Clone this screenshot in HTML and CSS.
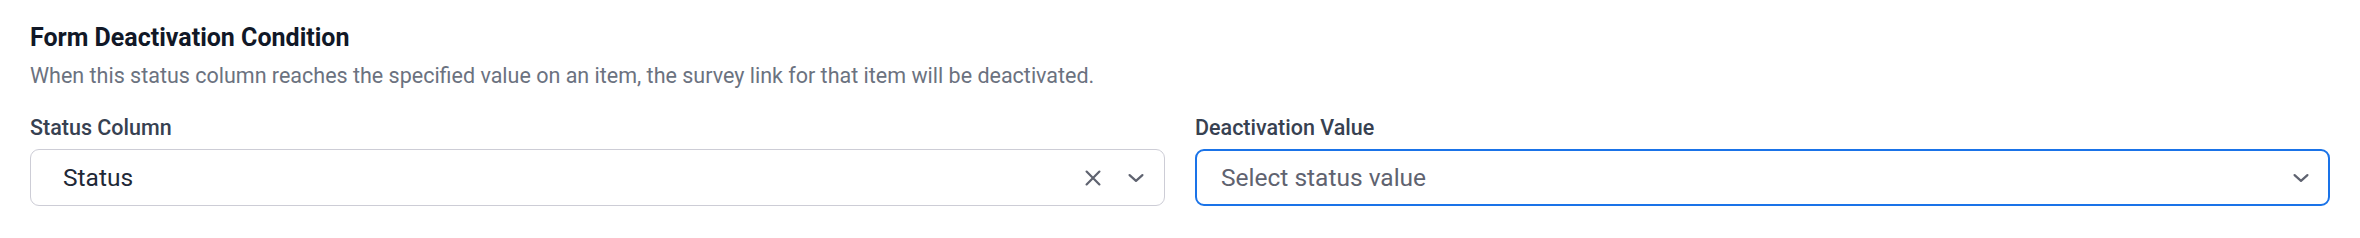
FILE: index.html
```html
<!DOCTYPE html>
<html lang="en">
<head>
    <meta charset="UTF-8">
    <meta name="viewport" content="width=device-width, initial-scale=1.0">
    <title>Form Deactivation Condition</title>
    <link rel="stylesheet" href="styles.css">
</head>
<body>
    <div class="section">
        <h3 class="title">Form Deactivation Condition</h3>
        <p class="hint">When this status column reaches the specified value on an item, the survey link for that item will be deactivated.</p>

        <div class="fields">
            <!-- Columna de estado -->
            <div class="field">
                <label class="label">Status Column</label>
                <div class="select">
                    <span class="value">Status</span>
                    <div class="indicators">
                        <svg class="icon" viewBox="0 0 24 24"><path d="M6.5 6.5l11 11M17.5 6.5l-11 11"/></svg>
                        <svg class="icon" viewBox="0 0 24 24"><path d="M6.5 9.5l5.5 5 5.5-5"/></svg>
                    </div>
                </div>
            </div>

            <!-- Valor de desactivacion (con foco) -->
            <div class="field">
                <label class="label">Deactivation Value</label>
                <div class="select focused">
                    <span class="placeholder">Select status value</span>
                    <div class="indicators">
                        <svg class="icon" viewBox="0 0 24 24"><path d="M6.5 9.5l5.5 5 5.5-5"/></svg>
                    </div>
                </div>
            </div>
        </div>
    </div>
</body>
</html>
```

FILE: styles.css
```css
body {
    margin: 0;
    background-color: #ffffff;
    font-family: Roboto, "Liberation Sans", Arial, sans-serif;
}
.section {
    padding: 20px 30px;
}
.title {
    margin: 0;
    font-size: 25px;
    line-height: 36px;
    font-weight: 700;
    color: #111827;
}
.hint {
    margin: 4px 0 0 0;
    font-size: 21.5px;
    line-height: 31.5px;
    color: #6b7280;
}
.fields {
    display: grid;
    grid-template-columns: 1fr 1fr;
    gap: 30px;
    margin-top: 20px;
}
.field {
    display: flex;
    flex-direction: column;
}
.label {
    font-size: 21.5px;
    line-height: 31.5px;
    font-weight: 500;
    color: #374151;
    margin-bottom: 6px;
}
.select {
    display: flex;
    align-items: center;
    height: 57px;
    box-sizing: border-box;
    border: 1px solid #cdcdd6;
    border-radius: 9px;
    padding: 0 14px 0 25px;
    background-color: #ffffff;
}
.select.focused {
    border: 2px solid #1a73e8;
    padding-left: 24px;
    padding-right: 13px;
}
.value {
    flex: 1;
    padding-left: 7px;
    font-size: 24.5px;
    color: #1f2937;
}
.placeholder {
    flex: 1;
    font-size: 24.5px;
    color: #5f6370;
}
.indicators {
    display: flex;
    align-items: center;
    gap: 15px;
}
.icon {
    width: 28px;
    height: 28px;
    fill: none;
    stroke: #5f6370;
    stroke-width: 1.9;
    stroke-linecap: round;
    stroke-linejoin: round;
}
```
